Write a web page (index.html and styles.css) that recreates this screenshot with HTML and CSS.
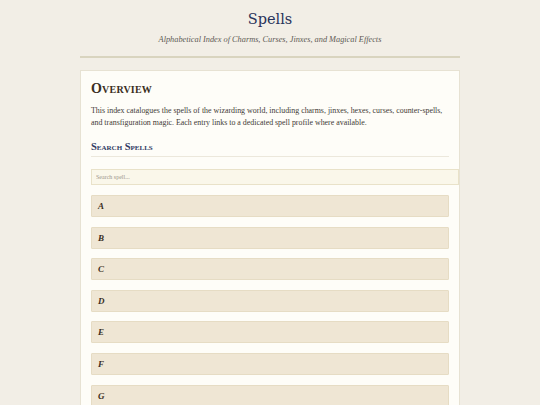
FILE: index.html
```html
<!DOCTYPE html>
<html>
<head>
<meta charset="utf-8">
<link rel="stylesheet" href="styles.css">
</head>
<body>
<header class="masthead">
  <h1 class="title">Spells</h1>
  <p class="subtitle">Alphabetical Index of Charms, Curses, Jinxes, and Magical Effects</p>
</header>
<main class="card">
  <h2 class="overview">Overview</h2>
  <p class="intro">This index catalogues the spells of the wizarding world, including charms, jinxes, hexes, curses, counter-spells, and transfiguration magic. Each entry links to a dedicated spell profile where available.</p>
  <h3 class="search-title">Search Spells</h3>
  <input class="search" type="text" placeholder="Search spell...">
  <ul class="letters">
    <li class="letter">A</li>
    <li class="letter">B</li>
    <li class="letter">C</li>
    <li class="letter">D</li>
    <li class="letter">E</li>
    <li class="letter">F</li>
    <li class="letter">G</li>
  </ul>
</main>
</body>
</html>
```
FILE: styles.css
```css
html, body {
  margin: 0;
  padding: 0;
  background: #f2eee6;
  font-family: "Liberation Serif", "DejaVu Serif", serif;
  color: #3b3328;
}
.masthead {
  width: 380px;
  margin: 0 auto;
  padding-top: 8px;
  padding-bottom: 11px;
  border-bottom: 2px solid #d9d4bf;
  text-align: center;
}
.title {
  margin: 0;
  font-family: "DejaVu Serif", serif;
  font-weight: normal;
  font-size: 14.5px;
  line-height: 22px;
  color: #29335a;
}
.subtitle {
  margin: 4px 0 0;
  font-style: italic;
  font-size: 8.3px;
  line-height: 11px;
  color: #5e5a55;
}
.card {
  width: 358px;
  margin: 12px auto 0;
  padding: 9px 10px 0;
  background: #fefdf8;
  border: 1px solid #e7e2d3;
  border-bottom: none;
  height: 400px;
}
.overview {
  margin: 0;
  font-variant: small-caps;
  font-size: 14px;
  line-height: 18px;
  font-weight: bold;
  color: #3a2e22;
  letter-spacing: 0.2px;
}
.intro {
  margin: 7px 0 0;
  font-size: 7.9px;
  line-height: 12px;
  color: #3e3a35;
}
.search-title {
  margin: 11px 0 0;
  padding-bottom: 3px;
  border-bottom: 1px solid #ece8dc;
  font-variant: small-caps;
  font-size: 10.5px;
  line-height: 13px;
  font-weight: bold;
  color: #2f3a63;
}
.search {
  display: block;
  box-sizing: border-box;
  width: 368px;
  height: 16px;
  margin: 12px 0 0;
  padding: 0 4px;
  background: #faf7ea;
  border: 1px solid #e9e2c9;
  font-family: "Liberation Serif", serif;
  font-size: 6px;
  color: #3b3328;
  outline: none;
}
.search::placeholder {
  color: #9a958c;
}
.letters {
  list-style: none;
  margin: 10px 0 0;
  padding: 0;
  display: flex;
  flex-direction: column;
  gap: 9.6px;
}
.letter {
  height: 20px;
  padding: 0 6px;
  display: flex;
  align-items: center;
  background: #efe6d4;
  border: 1px solid #e6dcc4;
  border-radius: 1px;
  font-style: italic;
  font-weight: bold;
  font-size: 9px;
  color: #3a2e22;
}
```
